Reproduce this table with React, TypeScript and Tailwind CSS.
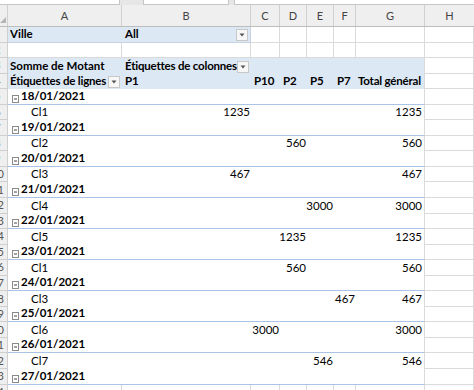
import React from 'react';

// Pivot table sheet view (Excel-like)
type Col = 'A' | 'B' | 'C' | 'D' | 'E' | 'F' | 'G';

type Row =
  | { kind: 'filter' }
  | { kind: 'blank' }
  | { kind: 'head1' }
  | { kind: 'head2' }
  | { kind: 'date'; label: string }
  | { kind: 'item'; label: string; col: Col; value: string }
  | { kind: 'empty' };

const W: Record<Col, string> = {
  A: 'w-[114px]',
  B: 'w-[129px]',
  C: 'w-[29px]',
  D: 'w-[27px]',
  E: 'w-[27px]',
  F: 'w-[22px]',
  G: 'w-[69px]',
};

const COLS: Col[] = ['A', 'B', 'C', 'D', 'E', 'F', 'G'];

const data: [string, string, Col, string][] = [
  ['18/01/2021', 'Cl1', 'B', '1235'],
  ['19/01/2021', 'Cl2', 'D', '560'],
  ['20/01/2021', 'Cl3', 'B', '467'],
  ['21/01/2021', 'Cl4', 'E', '3000'],
  ['22/01/2021', 'Cl5', 'D', '1235'],
  ['23/01/2021', 'Cl1', 'D', '560'],
  ['24/01/2021', 'Cl3', 'F', '467'],
  ['25/01/2021', 'Cl6', 'C', '3000'],
  ['26/01/2021', 'Cl7', 'E', '546'],
];

const rows: Row[] = [
  { kind: 'filter' },
  { kind: 'blank' },
  { kind: 'head1' },
  { kind: 'head2' },
  ...data.flatMap(([d, l, c, v]) => [
    { kind: 'date', label: d } as Row,
    { kind: 'item', label: l, col: c, value: v } as Row,
  ]),
  { kind: 'date', label: '27/01/2021' },
  { kind: 'empty' },
];

function DropBtn() {
  return (
    <span className="flex h-[12px] w-[12px] shrink-0 items-center justify-center border border-[#c8c8c8] bg-[#f7f7f7]">
      <svg width="6" height="4" viewBox="0 0 6 4">
        <path d="M0.5 0.5 L5.5 0.5 L3 3.5 Z" fill="#555" />
      </svg>
    </span>
  );
}

function Collapse() {
  return (
    <svg width="7" height="8" viewBox="0 0 7 8" className="mr-[2px] shrink-0">
      <rect x="0.5" y="0.5" width="6" height="7" fill="#fff" stroke="#8a8a8a" />
      <path d="M2 4 H5" stroke="#444" strokeWidth="1" />
    </svg>
  );
}

const grid = 'border-r border-b border-[#dadada]';

function RowCells({ row }: { row: Row }) {
  const cell = 'h-full shrink-0 flex items-end pb-[1px] overflow-visible whitespace-nowrap';

  if (row.kind === 'filter') {
    return (
      <>
        <div className={`${cell} ${W.A} bg-[#dde8f5] border-b border-[#c6d3e2] pl-[2px] font-bold`}>Ville</div>
        <div className={`${cell} ${W.B} bg-[#dde8f5] border-b border-r border-[#c6d3e2] pl-[3px] font-bold justify-between pr-[2px] items-center`}>
          <span>All</span>
          <DropBtn />
        </div>
        {(['C', 'D', 'E', 'F', 'G'] as Col[]).map((c) => (
          <div key={c} className={`${cell} ${W[c]} ${grid}`} />
        ))}
      </>
    );
  }

  if (row.kind === 'blank' || row.kind === 'empty') {
    return (
      <>
        {COLS.map((c) => (
          <div key={c} className={`${cell} ${W[c]} ${grid}`} />
        ))}
      </>
    );
  }

  if (row.kind === 'head1') {
    return (
      <>
        <div className={`${cell} ${W.A} bg-[#dde8f5] pl-[2px] font-bold`}>Somme de Motant</div>
        <div className={`${cell} ${W.B} bg-[#dde8f5] pl-[3px] font-bold items-center justify-between pr-[2px]`}>
          <span className="tracking-[-0.2px]">Étiquettes de colonnes</span>
          <DropBtn />
        </div>
        {(['C', 'D', 'E', 'F'] as Col[]).map((c) => (
          <div key={c} className={`${cell} ${W[c]} bg-[#dde8f5]`} />
        ))}
        <div className={`${cell} ${W.G} bg-[#dde8f5] border-r border-[#dadada]`} />
      </>
    );
  }

  if (row.kind === 'head2') {
    return (
      <>
        <div className={`${cell} ${W.A} bg-[#dde8f5] pl-[2px] font-bold items-center justify-between pr-[2px]`}>
          <span className="tracking-[-0.2px]">Étiquettes de lignes</span>
          <DropBtn />
        </div>
        <div className={`${cell} ${W.B} bg-[#dde8f5] pl-[3px] font-bold`}>P1</div>
        <div className={`${cell} ${W.C} bg-[#dde8f5] pl-[3px] font-bold`}>P10</div>
        <div className={`${cell} ${W.D} bg-[#dde8f5] pl-[3px] font-bold`}>P2</div>
        <div className={`${cell} ${W.E} bg-[#dde8f5] pl-[3px] font-bold`}>P5</div>
        <div className={`${cell} ${W.F} bg-[#dde8f5] pl-[3px] font-bold`}>P7</div>
        <div className={`${cell} ${W.G} bg-[#dde8f5] border-r border-[#dadada] pl-[2px] font-bold tracking-[-0.2px]`}>Total général</div>
      </>
    );
  }

  if (row.kind === 'date') {
    return (
      <>
        <div className={`${cell} ${W.A} border-b border-[#a9c4e6] pl-[4px] font-bold items-center`}>
          <Collapse />
          <span>{row.label}</span>
        </div>
        {(['B', 'C', 'D', 'E', 'F'] as Col[]).map((c) => (
          <div key={c} className={`${cell} ${W[c]} border-b border-[#a9c4e6]`} />
        ))}
        <div className={`${cell} ${W.G} border-b border-b-[#a9c4e6] border-r border-r-[#dadada]`} />
      </>
    );
  }

  // item row
  return (
    <>
      <div className={`${cell} ${W.A} pl-[23px]`}>{row.label}</div>
      {(['B', 'C', 'D', 'E', 'F'] as Col[]).map((c) => (
        <div key={c} className={`${cell} ${W[c]} justify-end pr-[1px]`}>
          {row.col === c ? row.value : ''}
        </div>
      ))}
      <div className={`${cell} ${W.G} justify-end pr-[2px] border-r border-[#dadada]`}>{row.value}</div>
    </>
  );
}

export default function App() {
  return (
    <div
      className="h-[390px] w-[474px] overflow-hidden bg-white text-[11.5px] leading-[14px] text-black"
      style={{ fontFamily: 'Lato, "Noto Sans", sans-serif' }}
    >
      {/* formula bar remnants */}
      <div className="flex h-[5px] bg-[#e6e6e6]">
        <div className="w-[120px] border-b border-r border-[#c6c6c6] bg-white" />
        <div className="w-[23px]" />
        <div className="w-[86px] border-b border-x border-[#c6c6c6] bg-white" />
        <div className="w-[5px]" />
        <div className="flex-1 border-b border-l border-[#c6c6c6] bg-white" />
      </div>

      {/* column letters */}
      <div className="flex h-[22px] border-b border-[#bdbdbd] bg-[#efefef] text-[11px] text-[#444]">
        <div className="flex w-[8px] shrink-0 items-end justify-end border-r border-[#cfcfcf] pb-[3px] pr-[1px]">
          <svg width="6" height="6" viewBox="0 0 6 6">
            <path d="M6 0 L6 6 L0 6 Z" fill="#b5b5b5" />
          </svg>
        </div>
        {COLS.map((c) => (
          <div key={c} className={`${W[c]} flex shrink-0 items-center justify-center border-r border-[#cfcfcf]`}>
            {c}
          </div>
        ))}
        <div className="flex flex-1 items-center justify-center">H</div>
      </div>

      {rows.map((row, i) => (
        <div key={i} className="flex h-[15.56px]">
          <div className="-ml-[12px] flex h-full w-[20px] shrink-0 items-center justify-center border-b border-r border-[#cfcfcf] bg-[#efefef] text-[11px] text-[#555]">
            {i + 1}
          </div>
          <RowCells row={row} />
          <div className={`h-full flex-1 ${grid}`} />
        </div>
      ))}
    </div>
  );
}
